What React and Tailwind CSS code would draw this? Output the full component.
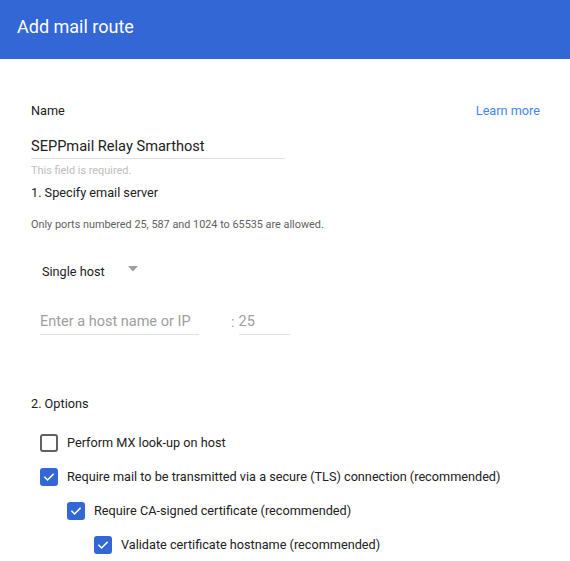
import React from "react";

function Check({ checked }) {
  if (checked) {
    return (
      <span className="flex h-[18px] w-[18px] shrink-0 items-center justify-center rounded-[3px] bg-[#3367d6]">
        <svg width="14" height="14" viewBox="0 0 24 24" fill="none">
          <path d="M5 12.5l4.5 4.5L19 7.5" stroke="white" strokeWidth="2.6" strokeLinecap="square" />
        </svg>
      </span>
    );
  }
  return <span className="h-[18px] w-[18px] shrink-0 rounded-[3px] border-2 border-[#616161]" />;
}

function Option({ checked, indent, children }) {
  return (
    <div className={`flex h-[34px] items-center gap-[9px] ${indent}`}>
      <Check checked={checked} />
      <span className="text-[12.7px] text-[#212121]">{children}</span>
    </div>
  );
}

export default function App() {
  return (
    <div className="h-[561px] w-[570px] overflow-hidden bg-white font-['Roboto',sans-serif] text-[#212121]">
      <div className="flex h-[59px] items-center bg-[#3367d6] pl-[17px] pb-[6px]">
        <span className="text-[18px] text-white">Add mail route</span>
      </div>
      <div className="pl-[31px] pr-[30px] pt-[42px]">
        <div className="flex h-[20px] items-center justify-between">
          <span className="text-[12.7px]">Name</span>
          <span className="text-[12.7px] text-[#4285f4]">Learn more</span>
        </div>
        <div className="mt-[15px] w-[254px] border-b border-[#e0e0e0] pb-[2px] text-[14.6px] leading-[20px]">
          SEPPmail Relay Smarthost
        </div>
        <div className="mt-[5px] text-[10.9px] leading-[14px] text-[#bdbdbd]">This field is required.</div>
        <div className="mt-[7px] text-[12.7px] leading-[16px]">1. Specify email server</div>
        <div className="mt-[17px] text-[10.85px] leading-[14px] text-[#616161]">
          Only ports numbered 25, 587 and 1024 to 65535 are allowed.
        </div>
        <div className="ml-[11px] mt-[30px] flex h-[20px] items-center">
          <span className="text-[12.7px]">Single host</span>
          <svg className="ml-[23px] -mt-[7px]" width="10" height="6" viewBox="0 0 10 6">
            <path d="M0 0h10L5 5.5z" fill="#9e9e9e" />
          </svg>
        </div>
        <div className="ml-[9px] mt-[31px] flex items-end">
          <div className="w-[159px] border-b border-[#e0e0e0] pb-[3px] text-[14.5px] leading-[18px] text-[#9e9e9e]">
            Enter a host name or IP
          </div>
          <span className="ml-[32px] pb-[3px] text-[14.5px] leading-[18px] text-[#9e9e9e]">:</span>
          <div className="ml-[4px] w-[51px] border-b border-[#e0e0e0] pb-[3px] text-[14.5px] leading-[18px] text-[#9e9e9e]">
            25
          </div>
        </div>
        <div className="mt-[61px] text-[12.7px] leading-[16px]">2. Options</div>
        <div className="mt-[14px]">
          <Option checked={false} indent="ml-[9px]">Perform MX look-up on host</Option>
          <Option checked indent="ml-[9px]">Require mail to be transmitted via a secure (TLS) connection (recommended)</Option>
          <Option checked indent="ml-[36px]">Require CA-signed certificate (recommended)</Option>
          <Option checked indent="ml-[63px]">Validate certificate hostname (recommended)</Option>
        </div>
      </div>
    </div>
  );
}
